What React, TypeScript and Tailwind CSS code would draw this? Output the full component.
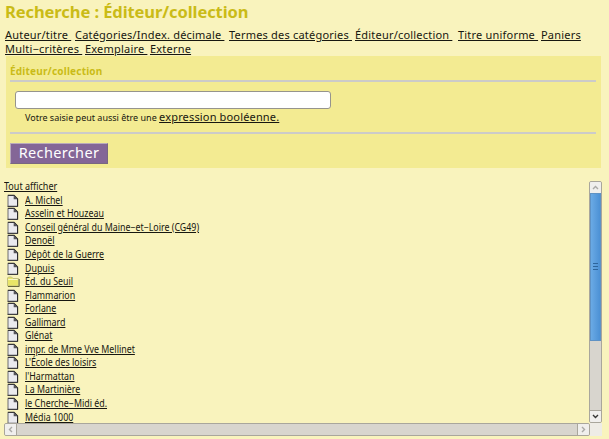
type Link = { label: string; box: string };

const navRows: Link[][] = [
  [
    { label: 'Auteur/titre ', box: 'w-[70px]' },
    { label: 'Catégories/Index. décimale ', box: 'w-[154px]' },
    { label: 'Termes des catégories ', box: 'w-[126px]' },
    { label: 'Éditeur/collection ', box: 'w-[103px]' },
    { label: 'Titre uniforme ', box: 'w-[83px]' },
    { label: 'Paniers', box: 'w-[40px]' },
  ],
  [
    { label: 'Multi−critères ', box: 'w-[80px]' },
    { label: 'Exemplaire ', box: 'w-[65px]' },
    { label: 'Externe', box: 'w-[42px]' },
  ],
];

const publishers = [
  'A. Michel',
  'Asselin et Houzeau',
  'Conseil général du Maine−et−Loire (CG49)',
  'Denoël',
  'Dépôt de la Guerre',
  'Dupuis',
  'Éd. du Seuil',
  'Flammarion',
  'Forlane',
  'Gallimard',
  'Glénat',
  'impr. de Mme Vve Mellinet',
  "L'École des loisirs",
  "l'Harmattan",
  'La Martinière',
  'le Cherche−Midi éd.',
  'Média 1000',
];

function PageIcon() {
  return (
    <svg width="12" height="13" viewBox="0 0 12 13" className="block shrink-0">
      <path d="M1 1.5h6l3.5 3.5v7.3H1z" fill="#eaeaee" stroke="#6c6c70" />
      <path d="M.8 1.2H7l3.6 3.8v7.4" fill="none" stroke="#262629" strokeWidth="1.1" />
      <path d="M6.7 1.3v3.9h3.9z" fill="#56565a" />
      <path d="M.5 12.4h10.3" stroke="#37373a" />
    </svg>
  );
}

function FolderIcon() {
  return (
    <svg width="13" height="13" viewBox="0 0 13 13" className="block shrink-0">
      <path d="M.5 11V3l1-1h3L6 3.5h5.5V11z" fill="#e9e568" stroke="#c2bf80" />
      <path d="M1.2 4.5h9.5" stroke="#fafac5" />
      <path d="M1 11.5h11.2V4" fill="none" stroke="#66653c" />
    </svg>
  );
}

function Arrow({ d, color }: { d: string; color: string }) {
  return (
    <svg width="11" height="11" viewBox="0 0 11 11">
      <path d={d} fill="none" stroke={color} strokeWidth="1.4" />
    </svg>
  );
}

export default function App() {
  return (
    <div className="h-[439px] w-[609px] overflow-hidden bg-[#f9f3bd] font-['Noto_Sans','Open_Sans',sans-serif] text-[#171710]">
      <h1 className="h-[28px] pl-[5px] pt-[1px] text-[16.5px] font-bold leading-[22px] tracking-[-0.08px] whitespace-pre text-[#cabb17]">
        Recherche : Éditeur/collection
      </h1>
      <nav className="h-[28px] pl-[5px] text-[11px] leading-[14px] tracking-[0.2px]">
        {navRows.map((row, i) => (
          <div key={i} className="flex h-[14px]">
            {row.map(({ label, box }) => (
              <div key={label} className={`${box} shrink-0 whitespace-pre`}>
                <a className="underline underline-offset-[1px]">{label}</a>
              </div>
            ))}
          </div>
        ))}
      </nav>

      <section className="ml-[6px] h-[112px] w-[595px] bg-[#f3eb92] pl-[4px] pr-[5px]">
        <h2 className="h-[24px] pt-[8px] text-[10px] font-bold leading-[14px] tracking-[0.2px] text-[#cabb17]">Éditeur/collection</h2>
        <div className="h-[2px] bg-[#cccbc9]" />
        <div className="ml-[5px] mt-[9px] h-[18px] w-[316px] rounded-[3px] border border-[#96948d] bg-white" />
        <p className="ml-[15px] h-[23px] whitespace-pre pt-[1px] text-[9px] leading-[14px]">
          Votre saisie peut aussi être une <a className="text-[11px] tracking-[0.16px] underline underline-offset-[1px]">expression booléenne.</a>
        </p>
        <div className="h-[2px] bg-[#cccbc9]" />
        <button className="mt-[9px] block h-[21px] w-[98px] border border-[#b9aabb] border-b-[#796780] border-r-[#796780] bg-[#846697] pb-[2px] text-[14.5px] leading-[17px] tracking-[0.35px] text-white">
          Rechercher
        </button>
      </section>

      <div className="mt-[13px] flex h-[242px] pl-[4px]">
        <div className="h-[242px] w-[585px] text-[10px]">
          <a className="block h-[12.5px] w-fit origin-left scale-x-[0.9] leading-[11px] underline underline-offset-[1px]">Tout afficher</a>
          <ul>
            {publishers.map((name) => (
              <li key={name} className="flex h-[13.56px] items-center pl-[3px]">
                <div className="w-[18px]">{name === 'Éd. du Seuil' ? <FolderIcon /> : <PageIcon />}</div>
                <a className="origin-left scale-x-[0.885] whitespace-pre leading-[13px] underline underline-offset-[1px]">{name}</a>
              </li>
            ))}
          </ul>
        </div>
        <div className="flex h-[242px] w-[13px] flex-col overflow-hidden rounded-[2px] border border-[#a9a69c] bg-[#d8d5ce]">
          <div className="flex h-[11px] items-center justify-center bg-[#f0efed]">
            <Arrow d="M3 7l2.5-2.5L8 7" color="#aaa9a6" />
          </div>
          <div className="flex h-[148px] shrink-0 flex-col items-center justify-center gap-[2px] border border-[#5f92c4] bg-linear-to-r from-[#6aaae5] to-[#4c91d5] pb-[2px]">
            <div className="h-px w-[5px] bg-[#2e659c]" />
            <div className="h-px w-[5px] bg-[#2e659c]" />
            <div className="h-px w-[5px] bg-[#2e659c]" />
          </div>
          <div className="mt-auto flex h-[12px] items-center justify-center border-t border-[#a9a69c] bg-[#f0efed]">
            <Arrow d="M3 4l2.5 2.5L8 4" color="#373735" />
          </div>
        </div>
      </div>
      <div className="flex h-[13px] pl-[4px]">
        <div className="flex h-[13px] w-[586px] justify-between overflow-hidden rounded-[2px] border border-[#a9a69c] bg-[#d8d5ce]">
          <div className="flex w-[12px] items-center justify-center border-r border-[#a9a69c] bg-[#f0efed]">
            <Arrow d="M7 3L4.5 5.5L7 8" color="#aaa9a6" />
          </div>
          <div className="flex w-[12px] items-center justify-center border-l border-[#a9a69c] bg-[#f0efed]">
            <Arrow d="M4 3l2.5 2.5L4 8" color="#aaa9a6" />
          </div>
        </div>
        <div className="h-[13px] w-[12px] bg-[#eeece6]" />
      </div>
    </div>
  );
}
